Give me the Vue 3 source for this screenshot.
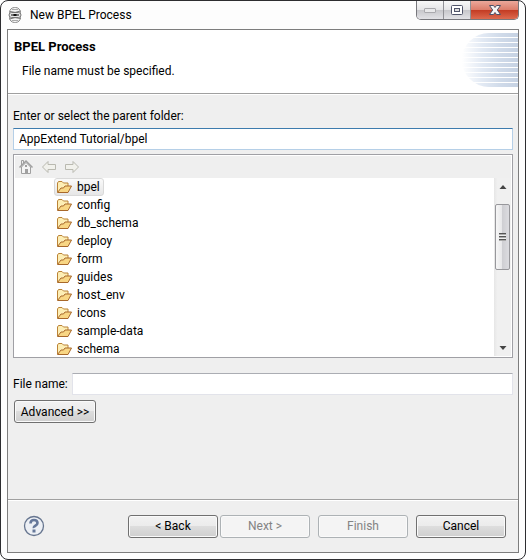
<script setup>
import { ref } from 'vue'

const folders = [
  'bpel',
  'config',
  'db_schema',
  'deploy',
  'form',
  'guides',
  'host_env',
  'icons',
  'sample-data',
  'schema',
]

const selected = ref('bpel')
const parentFolder = ref('AppExtend Tutorial/bpel')
const fileName = ref('')

function select(name) {
  selected.value = name
  parentFolder.value = 'AppExtend Tutorial/' + name
}
</script>

<template>
  <div class="window">
    <header class="titlebar">
      <svg class="app-icon" width="16" height="16" viewBox="0 0 16 16">
        <rect x="2.500" y="0.500" width="11" height="15" rx="5" fill="#f4f4f4" stroke="#888" />
        <path d="M3 4.500q5 2 10.500 -0.500M2.500 12q5.500 -2.500 11 -0.500" fill="none" stroke="#777" />
        <path d="M5 2.500h6M5 13.500h6" stroke="#aaa" />
        <rect x="2" y="5.500" width="12" height="5" rx="2.500" fill="#e6e6e6" stroke="#777" />
        <path d="M4 8h8" stroke="#333" stroke-width="1.200" />
        <path d="M6.500 8h3" stroke="#111" stroke-width="2" />
      </svg>
      <span class="caption">New BPEL Process</span>
      <div class="controls">
        <button type="button" class="ctl" aria-label="Minimize" disabled>
          <svg width="12" height="12" viewBox="0 0 12 12">
            <rect x="0.500" y="4.500" width="11" height="4" rx="0.500" fill="#e8e8ea" stroke="#a9a9ad" />
          </svg>
        </button>
        <button type="button" class="ctl" aria-label="Maximize">
          <svg width="12" height="12" viewBox="0 0 12 12">
            <rect x="0.500" y="1.500" width="11" height="9" rx="1" fill="#fff" stroke="#50546a" />
            <rect x="3.500" y="4.500" width="5" height="3" fill="#ddd" stroke="#50546a" />
          </svg>
        </button>
        <button type="button" class="ctl ctl--close" aria-label="Close">
          <svg width="12" height="12" viewBox="0 0 12 12">
            <path
              d="M0.500 1.500h4l1.500 2 1.500 -2h4l-3.200 4.500 3.200 4.500h-4l-1.500 -2 -1.500 2h-4l3.200 -4.500z"
              fill="#f6f6f6"
              stroke="#4d5066"
            />
          </svg>
        </button>
      </div>
    </header>

    <main class="client">
      <section class="banner">
        <div class="banner-text">
          <h1 class="banner-title">BPEL Process</h1>
          <p class="banner-message">File name must be specified.</p>
        </div>
        <div class="banner-art"></div>
      </section>

      <form class="content" @submit.prevent>
        <label class="label" for="parent">Enter or select the parent folder:</label>
        <input id="parent" v-model="parentFolder" class="field field--focus" type="text" />

        <div class="browser">
          <div class="toolbar">
            <button type="button" class="tool" aria-label="Home">
              <svg width="16" height="16" viewBox="0 0 16 16">
                <path d="M3.500 8v6.500h9V8L8 3.500z" fill="#f4f4f4" stroke="#a0a0a0" />
                <path d="M1.500 8.500L8 2l6.500 6.500" fill="none" stroke="#a0a0a0" stroke-width="1.500" />
                <path d="M3.500 6V1.500h2V4" fill="none" stroke="#a0a0a0" />
                <path d="M7 6h2v2H7zM7 10h3v5H7z" fill="#a0a0a0" />
              </svg>
            </button>
            <button type="button" class="tool" aria-label="Back">
              <svg width="16" height="16" viewBox="0 0 16 16">
                <path d="M1.500 8L7 2.500v3h7.500v5H7v3z" fill="#f1f1ec" stroke="#b9b9b0" />
              </svg>
            </button>
            <button type="button" class="tool" aria-label="Forward">
              <svg width="16" height="16" viewBox="0 0 16 16">
                <path d="M14.500 8L9 2.500v3H1.500v5H9v3z" fill="#f1f1ec" stroke="#b9b9b0" />
              </svg>
            </button>
          </div>

          <div class="tree-area">
            <ul class="tree">
              <li v-for="name in folders" :key="name" class="tree-row">
                <button
                  type="button"
                  class="node"
                  :class="{ 'node--selected': selected === name }"
                  @click="select(name)"
                >
                  <svg class="folder" width="16" height="16" viewBox="0 0 16 16">
                    <path
                      d="M1.500 13V4l1 -1.500h3.500L7.500 4h4.500v3"
                      fill="#fdeeb5"
                      stroke="#bb8336"
                    />
                    <path d="M1.500 13.500L5 9l2.500 0 1.500 -2h6.500L12 13.500z" fill="#f8d684" stroke="#a8682a" />
                  </svg>
                  <span>{{ name }}</span>
                </button>
              </li>
            </ul>
            <div class="scrollbar">
              <svg width="8" height="18" viewBox="0 0 8 18">
                <path d="M4 7l3.500 4h-7z" fill="#444" />
              </svg>
              <div class="thumb">
                <i class="grip"></i>
              </div>
              <svg class="scroll-down" width="8" height="18" viewBox="0 0 8 18">
                <path d="M4 12l3.500 -4h-7z" fill="#444" />
              </svg>
            </div>
          </div>
        </div>

        <div class="file-row">
          <label class="label" for="file">File name:</label>
          <input id="file" v-model="fileName" class="field" type="text" />
        </div>
        <button type="button" class="btn btn--advanced">Advanced &gt;&gt;</button>
      </form>

      <footer class="footer">
        <button type="button" class="help" aria-label="Help">
          <svg width="22" height="22" viewBox="0 0 22 22">
            <circle cx="11" cy="11" r="9.500" fill="#edf0f5" stroke="#66758f" stroke-width="1.300" />
            <path
              d="M7.500 8.500q0 -3.500 3.500 -3.500t3.500 3q0 1.500 -2 2.700t-1.500 2.300"
              fill="none"
              stroke="#66789a"
              stroke-width="2.600"
            />
            <rect x="9.500" y="14.500" width="3" height="3" fill="#66789a" />
          </svg>
        </button>
        <div class="nav">
          <button type="button" class="btn">&lt; Back</button>
          <button type="button" class="btn" disabled>Next &gt;</button>
        </div>
        <button type="button" class="btn" disabled>Finish</button>
        <button type="button" class="btn">Cancel</button>
      </footer>
    </main>
  </div>
</template>

<style>
body {
  background: #fff;
}
</style>

<style scoped>
.window {
  box-sizing: border-box;
  display: flex;
  flex-direction: column;
  min-height: 100vh;
  padding: 0 6px 6px;
  border: 1px solid #2d2d30;
  border-radius: 8px;
  background: #fdfdfd;
  color: #000;
  font-family: Roboto, 'Open Sans', sans-serif;
  font-size: 12px;
  line-height: 18px;
}

button,
input {
  box-sizing: border-box;
  margin: 0;
  font: inherit;
  color: inherit;
}

.titlebar {
  display: flex;
  align-items: center;
  height: 28px;
}

.app-icon {
  margin-right: 7px;
}

.caption {
  flex: 1;
}

.controls {
  display: flex;
  align-self: flex-start;
  height: 19px;
  overflow: hidden;
  border: 1px solid #77777c;
  border-top: 0;
  border-radius: 0 0 5px 5px;
  box-sizing: border-box;
}

.ctl {
  display: flex;
  align-items: center;
  justify-content: center;
  width: 27px;
  padding: 0;
  border: 0;
  border-right: 1px solid #919196;
  background: linear-gradient(#f8f8f8, #e4e4e6 50%, #c6c6ca 50%, #e2e2e6);
}

.ctl--close {
  width: 47px;
  border-right: 0;
  background: linear-gradient(#eba89b, #dc7c69 50%, #c23a22 50%, #dd6a4f);
}

.client {
  display: flex;
  flex: 1;
  flex-direction: column;
  border: 1px solid #7d7d7d;
  background: #efefef;
}

.banner {
  display: flex;
  justify-content: space-between;
  height: 63px;
  border-bottom: 1px solid #a0a0a0;
  background: #fff;
}

.banner-text {
  padding: 8px 6px;
}

.banner-title {
  margin: 0;
  font-size: 13px;
  font-weight: 700;
}

.banner-message {
  margin: 6px 8px;
}

.banner-art {
  width: 56px;
  height: 54px;
  margin-top: 3px;
  border-radius: 28px 0 0 28px;
  background:
    repeating-linear-gradient(transparent 0 4px, #fff 4px 5px),
    linear-gradient(90deg, #fff, #e3eaf4 35%, #cfdae9 70%, #c6d2e3);
}

.content {
  flex: 1;
  padding: 12px 5px;
  border-top: 1px solid #fff;
}

.label {
  display: block;
}

.field {
  display: block;
  width: 100%;
  height: 22px;
  padding: 0 5px;
  border: 1px solid #e2e3ea;
  border-top-color: #abadb3;
  background: #fff;
  outline: 0;
}

.field--focus {
  margin-top: 3px;
  border-color: #b5cfe7;
  border-top-color: #3d7bad;
}

.browser {
  margin-top: 4px;
  padding: 1px;
  border: 1px solid #a0a0a5;
  background: #fff;
}

.toolbar {
  display: flex;
  gap: 7px;
  height: 22px;
  align-items: center;
  padding: 0 3px;
  background: #efefef;
}

.tool,
.help {
  display: flex;
  padding: 0;
  border: 0;
  background: none;
}

.tree-area {
  display: flex;
  height: 178px;
}

.tree {
  flex: 1;
  margin: 0;
  padding: 0 0 0 39px;
  list-style: none;
  overflow: hidden;
}

.tree-row {
  height: 18px;
}

.node {
  display: flex;
  align-items: center;
  gap: 5px;
  height: 18px;
  padding: 0 3px 0 1px;
  border: 1px solid transparent;
  border-radius: 3px;
  background: none;
}

.node--selected {
  border-color: #d9d9d9;
  background: linear-gradient(#fafafa, #e6e6e6);
}

.scrollbar {
  display: flex;
  flex-direction: column;
  align-items: center;
  width: 17px;
  background: linear-gradient(90deg, #e6e6e6, #f0f0f0 20%);
}

.thumb {
  display: flex;
  align-items: center;
  justify-content: center;
  box-sizing: border-box;
  width: 15px;
  height: 66px;
  margin-top: 8px;
  border: 1px solid #97979b;
  border-radius: 2px;
  background: linear-gradient(90deg, #f6f6f6, #e6e6e8 50%, #cfcfd3 50%, #dcdce0);
}

.grip {
  width: 7px;
  height: 8px;
  background: repeating-linear-gradient(#555 0 1px, #aaa 1px 2px, #eee 2px 3px);
}

.scroll-down {
  margin-top: auto;
}

.file-row {
  display: flex;
  align-items: center;
  gap: 4px;
  margin-top: 15px;
}

.file-row .label {
  flex: none;
}

.file-row .field {
  flex: 1;
  min-width: 0;
}

.btn {
  width: 90px;
  height: 23px;
  padding: 0;
  border: 1px solid #707070;
  border-radius: 3px;
  background: linear-gradient(#f2f2f2, #ebebeb 50%, #dddddd 50%, #cfcfcf);
  box-shadow: inset 0 0 0 1px #fafafa;
  line-height: 20px;
}

.btn:disabled {
  border-color: #adb2b5;
  background: #f4f4f4;
  color: #838383;
}

.btn--advanced {
  width: 82px;
  margin: 5px 1px;
}

.footer {
  display: flex;
  align-items: center;
  gap: 8px;
  height: 52px;
  padding: 0 12px 0 15px;
  border-top: 1px solid #a0a0a0;
  box-shadow: inset 0 1px #fff;
}

.nav {
  display: flex;
  gap: 2px;
  margin-left: auto;
}
</style>
